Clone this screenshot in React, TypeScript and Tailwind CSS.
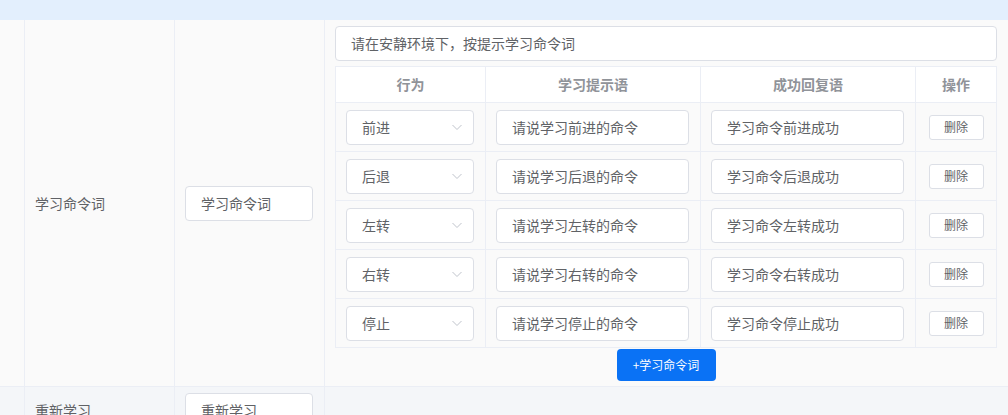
import React from 'react';

const rows = [
  { action: '前进', prompt: '请说学习前进的命令', reply: '学习命令前进成功' },
  { action: '后退', prompt: '请说学习后退的命令', reply: '学习命令后退成功' },
  { action: '左转', prompt: '请说学习左转的命令', reply: '学习命令左转成功' },
  { action: '右转', prompt: '请说学习右转的命令', reply: '学习命令右转成功' },
  { action: '停止', prompt: '请说学习停止的命令', reply: '学习命令停止成功' },
];

function Field({ value, className = '' }: { value: string; className?: string }) {
  return (
    <div
      className={`h-[35px] flex items-center px-[15px] bg-white border border-[#dcdfe6] rounded-[4px] text-[14px] text-[#606266] ${className}`}
    >
      {value}
    </div>
  );
}

function Select({ value }: { value: string }) {
  return (
    <div className="h-[35px] w-[128px] flex items-center justify-between pl-[15px] pr-[10px] bg-white border border-[#dcdfe6] rounded-[4px] text-[14px] text-[#606266]">
      <span>{value}</span>
      <svg width="12" height="12" viewBox="0 0 12 12" fill="none">
        <path d="M1.5 4l4.5 4.5L10.5 4" stroke="#c0c4cc" strokeWidth="1" />
      </svg>
    </div>
  );
}

export default function App() {
  return (
    <div
      className="w-[1008px] h-[415px] overflow-hidden bg-[#fafafa]"
      style={{ fontFamily: '"Microsoft YaHei", "Noto Sans CJK SC", sans-serif' }}
    >
      <div className="h-[20px] bg-[#e3effd]" />

      <div className="grid grid-cols-[25px_150px_150px_1fr] h-[367px] border-b border-[#ebeef5]">
        <div className="border-r border-[#ebeef5]" />
        <div className="border-r border-[#ebeef5] flex items-center pl-[10px] text-[14px] text-[#606266]">
          学习命令词
        </div>
        <div className="border-r border-[#ebeef5] flex items-center pl-[10px]">
          <Field value="学习命令词" className="w-[128px]" />
        </div>
        <div className="pl-[10px] pr-[12px] pt-[6px]">
          <Field value="请在安静环境下，按提示学习命令词" />
          <div className="mt-[5px] border-t border-l border-[#ebeef5]">
            <div className="grid grid-cols-[150px_215px_215px_81px] h-[36px] bg-white text-[14px] font-bold text-[#909399]">
              {['行为', '学习提示语', '成功回复语', '操作'].map((h) => (
                <div key={h} className="flex items-center justify-center border-r border-b border-[#ebeef5]">
                  {h}
                </div>
              ))}
            </div>
            {rows.map((r) => (
              <div key={r.action} className="grid grid-cols-[150px_215px_215px_81px] h-[49px]">
                <div className="flex items-center pl-[10px] border-r border-b border-[#ebeef5]">
                  <Select value={r.action} />
                </div>
                <div className="flex items-center pl-[10px] border-r border-b border-[#ebeef5]">
                  <Field value={r.prompt} className="w-[193px]" />
                </div>
                <div className="flex items-center pl-[10px] border-r border-b border-[#ebeef5]">
                  <Field value={r.reply} className="w-[193px]" />
                </div>
                <div className="flex items-center justify-center border-r border-b border-[#ebeef5]">
                  <button className="w-[55px] h-[25px] bg-white border border-[#dcdfe6] rounded-[3px] text-[12px] text-[#606266]">
                    删除
                  </button>
                </div>
              </div>
            ))}
          </div>
          <div className="flex justify-center mt-[1px]">
            <button className="w-[99px] h-[32px] bg-[#0a72f5] rounded-[4px] text-[12px] text-white">
              +学习命令词
            </button>
          </div>
        </div>
      </div>

      <div className="grid grid-cols-[25px_150px_150px_1fr] h-[28px] bg-[#f4f6f9]">
        <div className="border-r border-[#ebeef5]" />
        <div className="border-r border-[#ebeef5] pl-[10px] pt-[13px] text-[14px] leading-[20px] text-[#606266]">
          重新学习
        </div>
        <div className="border-r border-[#ebeef5] pl-[10px] pt-[6px]">
          <Field value="重新学习" className="w-[128px]" />
        </div>
        <div />
      </div>
    </div>
  );
}
